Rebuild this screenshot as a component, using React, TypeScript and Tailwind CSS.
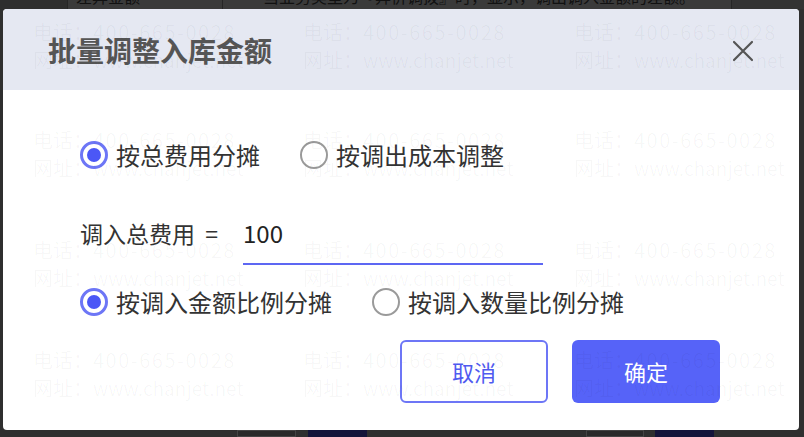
import React from "react";

const font = { fontFamily: '"Noto Sans CJK SC", "Noto Sans", sans-serif' };

function Radio({ checked, label }: { checked: boolean; label: string }) {
  return (
    <div className="flex items-center gap-[8px]">
      {checked ? (
        <span className="flex h-[28px] w-[28px] items-center justify-center rounded-full border-[3px] border-[#6d76f6] bg-white">
          <span className="h-[14px] w-[14px] rounded-full bg-[#4b57f6]" />
        </span>
      ) : (
        <span className="h-[28px] w-[28px] rounded-full border-[2px] border-[#9a9a9a] bg-white" />
      )}
      <span className="text-[24px] leading-[28px] text-[#333]">{label}</span>
    </div>
  );
}

const wmRows = [23, 131, 241, 351];
const wmCols = [30, 300, 571];

export default function App() {
  return (
    <div className="flex h-[437px] w-[804px] flex-col overflow-hidden bg-[#2f2f2f]" style={font}>
      {/* table row behind, mostly hidden */}
      <div className="flex h-[9px] shrink-0 overflow-hidden">
        <div className="w-[67px] bg-[#2e2e2e]" />
        <div className="w-[156px] border-x border-[#262626] bg-[#3a3a3a]">
          <div className="-mt-[14px] pl-[8px] text-[16px] leading-[20px] text-[#111]">差异金额</div>
        </div>
        <div className="w-[508px] bg-[#3a3a3a]">
          <div className="-mt-[14px] pl-[40px] text-[16px] leading-[20px] text-[#111]">
            当业务类型为『异价调拨』时，显示，调出调入金额的差额。
          </div>
        </div>
        <div className="flex-1 border-l border-[#262626] bg-[#333]" />
      </div>

      {/* dialog */}
      <div className="relative ml-[3px] flex h-[421px] w-[796px] shrink-0 flex-col overflow-hidden rounded-[4px] bg-white">
        <div className="flex h-[81px] shrink-0 items-center justify-between bg-[#e5e8f2] pl-[45px] pr-[45px]">
          <span className="text-[28px] font-bold leading-none text-[#555]">批量调整入库金额</span>
          <svg width="22" height="22" viewBox="0 0 22 22" className="mt-[2px]">
            <path d="M2 2 L20 20 M20 2 L2 20" stroke="#555" strokeWidth="2.2" strokeLinecap="round" />
          </svg>
        </div>

        <div className="flex flex-col pl-[77px]">
          <div className="mt-[51px] flex items-center gap-[40px]">
            <Radio checked label="按总费用分摊" />
            <Radio checked={false} label="按调出成本调整" />
          </div>

          <div className="mt-[48px] flex items-start">
            <span className="w-[163px] whitespace-pre text-[23px] leading-[32px] text-[#333]">调入总费用  =</span>
            <div className="w-[300px] border-b-2 border-[#5d67f3] pb-[14px] text-[24px] leading-[32px] text-[#222]">
              100
            </div>
          </div>

          <div className="mt-[23px] flex items-center gap-[40px]">
            <Radio checked label="按调入金额比例分摊" />
            <Radio checked={false} label="按调入数量比例分摊" />
          </div>

          <div className="mt-[24px] flex justify-end gap-[24px] pr-[79px]">
            <button className="flex h-[63px] w-[148px] items-center justify-center rounded-[6px] border-2 border-[#6d76f6] bg-white text-[22px] text-[#4f5af0]">
              取消
            </button>
            <button className="flex h-[63px] w-[148px] items-center justify-center rounded-[6px] bg-[#5663f8] text-[22px] text-white">
              确定
            </button>
          </div>
        </div>

        {/* watermark overlay */}
        <div className="pointer-events-none absolute inset-0">
          {wmRows.map((top) =>
            wmCols.map((left) => (
              <div
                key={`${top}-${left}`}
                className="absolute whitespace-nowrap text-[20px] leading-[28px] text-black/[0.035]"
                style={{ top: top - 14, left }}
              >
                <div>
                  电话：<span className="tracking-[1.5px]">400-665-0028</span>
                </div>
                <div>
                  网址：<span className="text-[19px]">www.chanjet.net</span>
                </div>
              </div>
            ))
          )}
        </div>
      </div>

      {/* bottom strip */}
      <div className="flex h-[7px] shrink-0">
        <div className="w-[237px]" />
        <div className="w-[59px] border border-[#444] bg-[#2a2a2a]" />
        <div className="ml-[12px] w-[59px] bg-[#14143a]" />
        <div className="w-[219px]" />
        <div className="w-[58px] border border-[#444] bg-[#2a2a2a]" />
        <div className="ml-[11px] w-[59px] bg-[#14143a]" />
      </div>
    </div>
  );
}
